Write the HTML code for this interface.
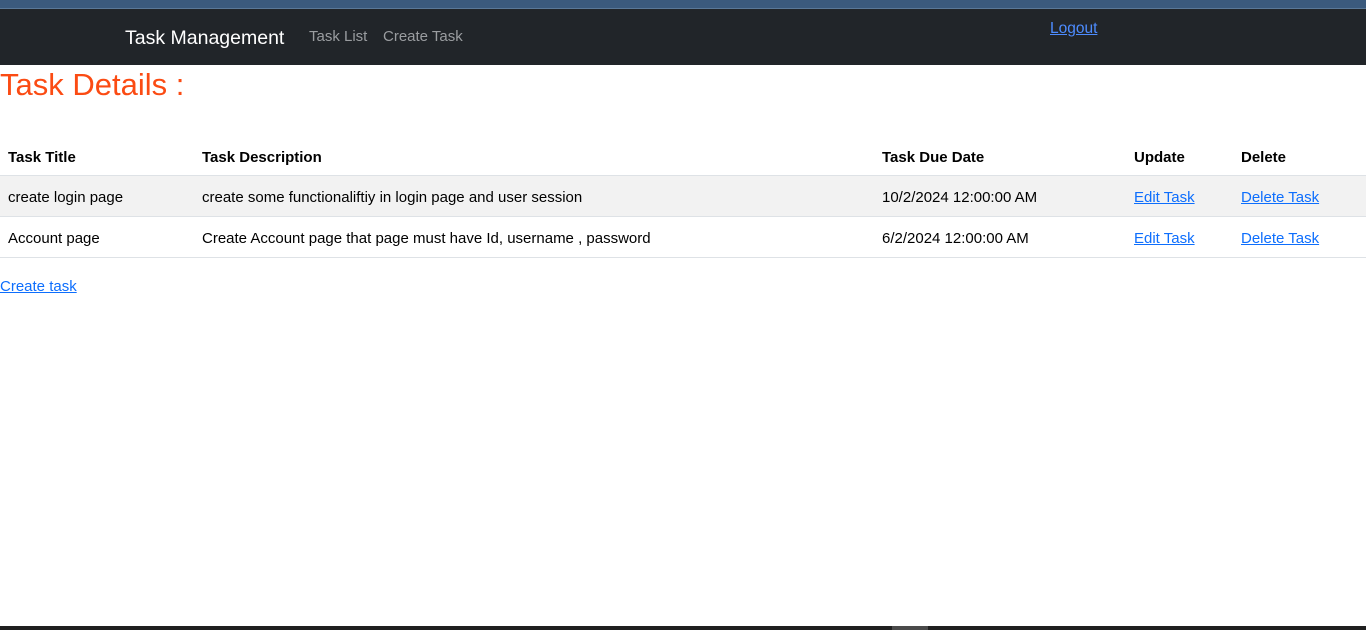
<!DOCTYPE html>
<html><head><style>
body{margin:0;width:1366px;height:630px;position:relative;overflow:hidden;font-family:"Segoe UI","Liberation Sans",sans-serif;font-size:15px;color:#000;background:#fff}
.top{position:absolute;left:0;top:0;width:1366px;height:8px;background:#3b5a7d;border-bottom:1px solid #5a7898}
.nav{position:absolute;left:0;top:9px;width:1366px;height:56px;background:#212529}
.brand{position:absolute;left:125px;top:18px;color:#fff;font-size:19.5px}
.nl{position:absolute;top:19px;color:#9a9da0;font-size:15px}
.logout{position:absolute;left:1050px;top:11px;color:#4d8cff;text-decoration:underline;font-size:15.5px}
h1{position:absolute;left:0;top:67px;margin:0;color:#fb4b13;font-size:31px;font-weight:normal}
table{position:absolute;left:0;top:137px;width:1366px;border-collapse:collapse;table-layout:fixed}
th{text-align:left;font-weight:bold;height:36px;padding:2px 8px 0;border-bottom:1px solid #dee2e6}
td{height:38px;padding:2px 8px 0;border-bottom:1px solid #dee2e6;white-space:nowrap}
tr.s td{background:#f2f2f2}
a{color:#0d6efd;text-decoration:underline}
.ct{position:absolute;left:0;top:278px}
.bb{position:absolute;left:0;top:626px;width:1366px;height:4px;background:#202020}
.bb i{position:absolute;left:892px;width:36px;height:4px;background:#4a4a4a}
</style></head><body>
<div class="top"></div>
<div class="nav">
<span class="brand">Task Management</span>
<span class="nl" style="left:309px">Task List</span>
<span class="nl" style="left:383px">Create Task</span>
<a class="logout">Logout</a>
</div>
<h1>Task Details :</h1>
<table>
<colgroup><col style="width:194px"><col style="width:680px"><col style="width:252px"><col style="width:107px"><col></colgroup>
<tr><th>Task Title</th><th>Task Description</th><th>Task Due Date</th><th>Update</th><th>Delete</th></tr>
<tr class="s"><td>create login page</td><td>create some functionaliftiy in login page and user session</td><td>10/2/2024 12:00:00 AM</td><td><a>Edit Task</a></td><td><a>Delete Task</a></td></tr>
<tr><td>Account page</td><td>Create Account page that page must have Id, username , password</td><td>6/2/2024 12:00:00 AM</td><td><a>Edit Task</a></td><td><a>Delete Task</a></td></tr>
</table>
<a class="ct">Create task</a>
<div class="bb"><i></i></div>
</body></html>
